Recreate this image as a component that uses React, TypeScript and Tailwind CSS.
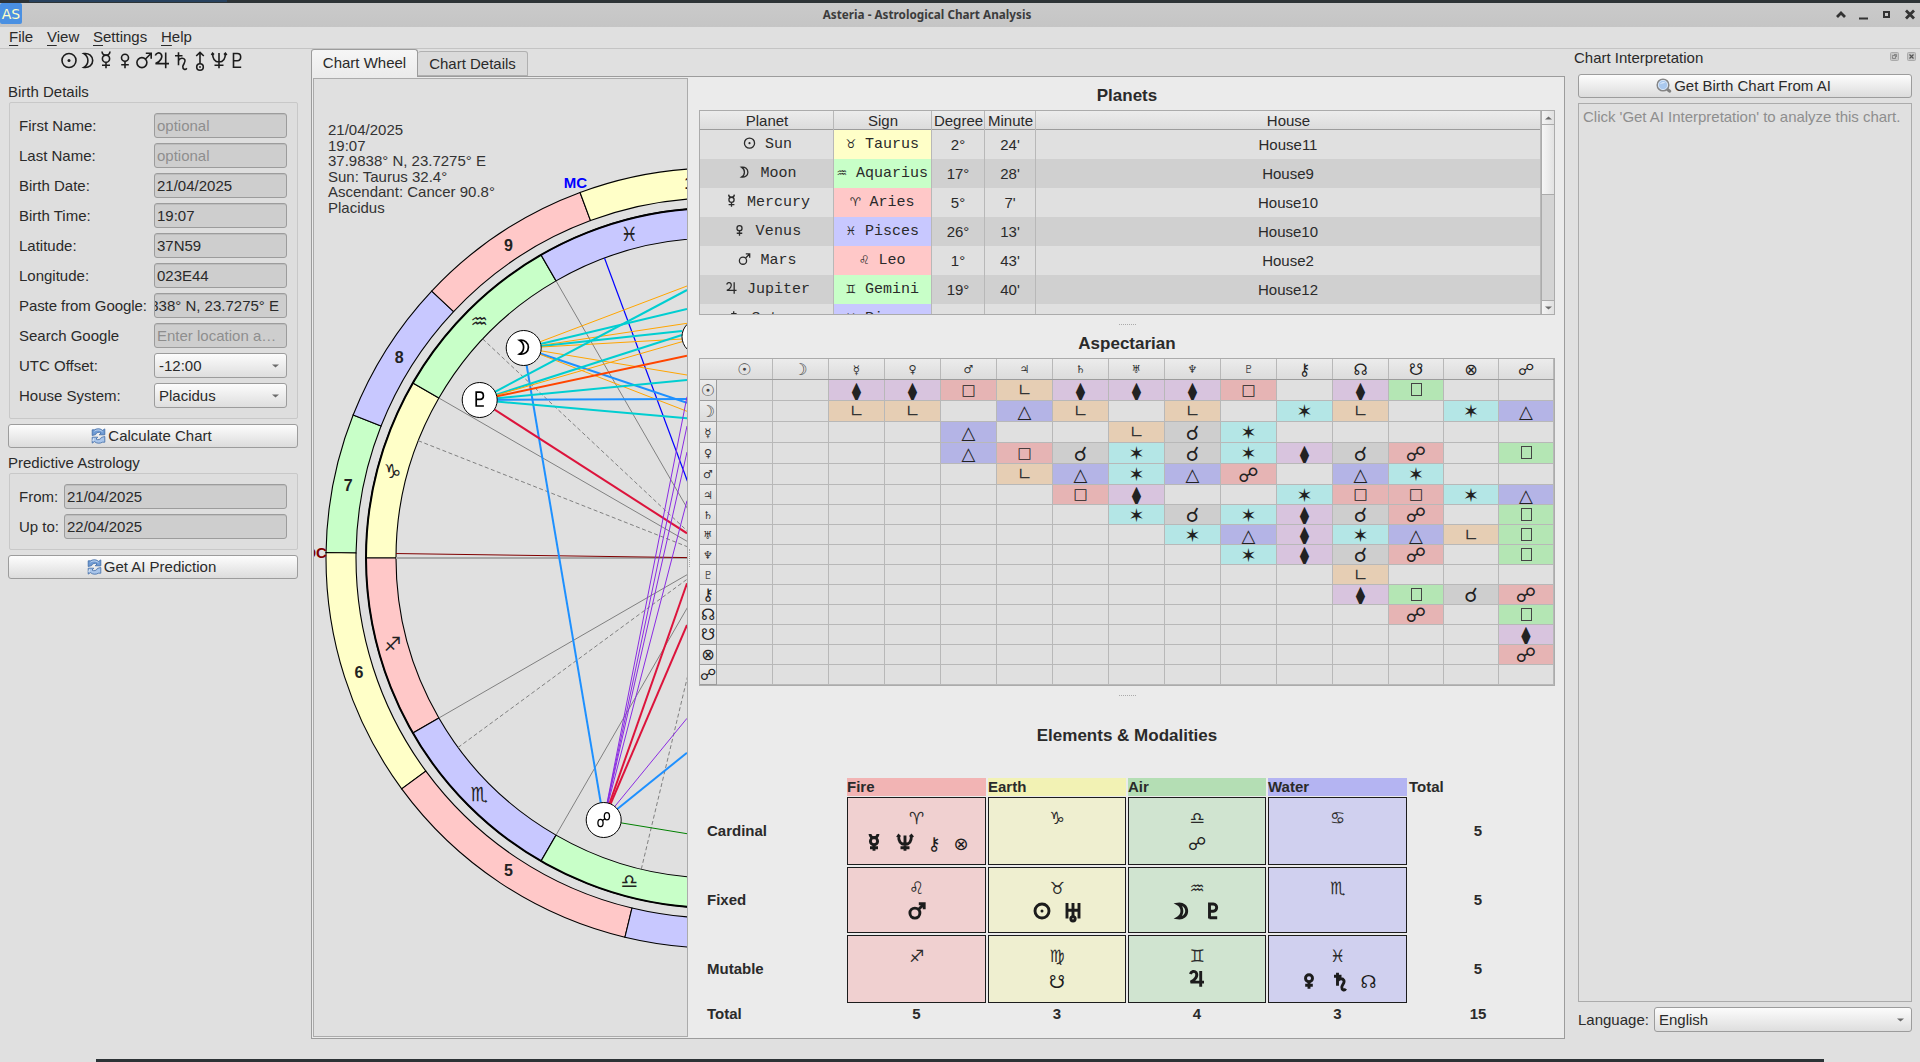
import React from "react";

const SYM = "font-['DejaVu_Sans',sans-serif]";

type Tone = "earth" | "air" | "fire" | "water";

const SIGN_BG: Record<Tone, string> = {
  earth: "bg-[#ffffc8]",
  air: "bg-[#c8ffc8]",
  fire: "bg-[#ffc8c8]",
  water: "bg-[#c8c8ff]",
};

function Glyph({ children, className = "" }: { children: React.ReactNode; className?: string }) {
  return <span className={`${SYM} ${className}`}>{children}</span>;
}

/* Line drawings of the planets on an 18x20 box with the base line at y = 17. */
function PlanetShape({ name }: { name: string }) {
  const dot = { fill: "currentColor", stroke: "none" };
  switch (name) {
    case "sun":
      return (
        <>
          <circle cx="9" cy="9.500" r="7" />
          <circle cx="9" cy="9.500" r="1.500" {...dot} />
        </>
      );
    case "moon":
      return <path d="M4.800 2.600C10 1.800 13.700 5.200 13.700 9.600S10 17.200 4.800 16.400C8 14.500 8.900 12 8.900 9.500S8 4.500 4.800 2.600Z" />;
    case "mercury":
      return (
        <>
          <path d="M5 .5q.3 3.700 4 3.700t4-3.700M9 11.400V17.200M5 14.300h8" />
          <circle cx="9" cy="7.700" r="3.600" />
        </>
      );
    case "venus":
      return (
        <>
          <circle cx="9" cy="6.800" r="3.500" />
          <path d="M9 10.300V17.200M5.200 13.800h7.600" />
        </>
      );
    case "mars":
      return (
        <>
          <circle cx="6.900" cy="11.600" r="5" />
          <path d="M10.500 8l5.200-5.200M10.800 2.300h5.400v5.400" />
        </>
      );
    case "jupiter":
      return <path d="M2.300 4.500C3.300 1.700 6.500 1 8.200 3.200C10 6 7.500 10.800 2.500 12.600H16M12.700 1.500V17.200" />;
    case "saturn":
      return <path d="M3 4.800h7.500M6.500 1.200V14.200M6.500 9.500C8.200 6.800 11.500 6.500 12.800 8.700C14.200 11.200 11 13 10.800 15.500C10.700 18.500 13.300 19.500 14.800 17.300" />;
    case "uranus-arrow":
      return (
        <>
          <path d="M9 1.500V12.700M5.200 5L9 1.400L12.800 5" />
          <circle cx="9" cy="16" r="3.300" />
          <circle cx="9" cy="16" r=".9" {...dot} />
        </>
      );
    case "uranus":
      return (
        <>
          <path d="M3 1.500v15.500M15 1.500v15.500M3 8.800h12M9 1.500v13.500" />
          <circle cx="9" cy="17.300" r="2.200" />
        </>
      );
    case "neptune":
      return <path d="M2.600 2.200C2.600 8.500 4.500 11 9 11S15.400 8.500 15.400 2.200M9 2V17.200M4.500 14.200h9M1.400 4L2.600 2.200L4 3.600M14 3.600l1.400-1.400l1.400 1.800" />;
    case "pluto":
      return <path d="M5.500 17V2.500H9.300C13.800 2.500 13.800 9.700 9.300 9.700H5.500M5.500 16.300h7.700" />;
  }
  return null;
}

function Planet({ name, className, weight = 1.6 }: { name: string; className: string; weight?: number }) {
  return (
    <svg className={`shrink-0 overflow-visible ${className}`} viewBox="0 0 18 20" fill="none" stroke="currentColor" strokeWidth={weight}>
      <PlanetShape name={name} />
    </svg>
  );
}

function Field({ value, placeholder, right }: { value?: string; placeholder?: string; right?: boolean }) {
  return (
    <div
      className={`flex h-[25px] min-w-0 flex-1 items-center overflow-hidden rounded-[3px] border border-[#9c9c9c] bg-[#cecece] shadow-[inset_0_1px_0_#bdbdbd] ${right ? "justify-end pr-[7px]" : "pl-[2px]"}`}
    >
      <span className={`whitespace-nowrap ${placeholder ? "text-[#8e8e8e]" : ""}`}>{value ?? placeholder}</span>
    </div>
  );
}

function Combo({ value }: { value: string }) {
  return (
    <div className="flex h-[25px] min-w-0 flex-1 items-center justify-between rounded-[3px] border border-[#9c9c9c] bg-linear-to-b from-[#fcfcfc] to-[#dedede] pr-[7px] pl-1">
      <span>{value}</span>
      <svg width="7" height="4" viewBox="0 0 7 4">
        <path d="M0 .5h7L3.5 3.5z" fill="#6a6a6a" />
      </svg>
    </div>
  );
}

function RefreshIcon() {
  return (
    <svg width="15" height="16" viewBox="0 0 15 16" fill="none">
      <path d="M1.200 7.500V1.800h2.300C6 .3 9.500.4 11.500 2.400L13.800.9V6.800H8.200L10 5C8.300 3.700 5.400 4.200 4.600 6.600z" fill="#6f9bd4" stroke="#3d69a6" strokeWidth=".8" />
      <path d="M3.500 3.200C6 1.300 9.500 1.700 11.500 3.800" stroke="#d5e3f5" strokeWidth=".9" />
      <path d="M13.800 8.500v5.700h-2.300C9 15.700 5.500 15.600 3.500 13.600L1.200 15.100V9.200h5.600L5 11c1.700 1.300 4.600.8 5.400-1.600z" fill="#a9c5ea" stroke="#3d69a6" strokeWidth=".8" />
      <path d="M2.500 10.500L1.800 13" stroke="#eef4fc" strokeWidth=".9" />
    </svg>
  );
}

function SearchIcon() {
  return (
    <svg width="16" height="16" viewBox="0 0 16 16" fill="none">
      <path d="M11.500 11.500l2.300 1.700" stroke="#808080" strokeWidth="3" strokeLinecap="round" />
      <circle cx="7" cy="7" r="5.800" fill="#a9c8ee" stroke="#858585" strokeWidth="1.500" />
      <circle cx="7" cy="7" r="4.600" stroke="#dce8f6" strokeWidth=".9" />
      <path d="M3.800 6.500C4.500 4 8 3 9.500 5 8 5 5 5.500 3.800 6.500z" fill="#dbe9fa" />
    </svg>
  );
}

function PushButton({ icon, label }: { icon: React.ReactNode; label: string }) {
  return (
    <div className="flex h-6 shrink-0 items-center justify-center gap-[2px] rounded-[3px] border border-[#9c9c9c] bg-linear-to-b from-[#fdfdfd] to-[#dcdcdc] pr-[3px] pb-px">
      {icon}
      <span>{label}</span>
    </div>
  );
}

function TitleBar() {
  return (
    <div className="flex h-6 shrink-0 items-center bg-linear-to-b from-[#cacaca] to-[#c5c5c5]">
      <div className="mb-[3px] flex h-[21px] w-[22px] items-center justify-center rounded-[2px] bg-[#4a90e2] pt-px font-['DejaVu_Sans'] text-[14px] text-[#ffffc8]">AS</div>
      <div className="flex-1 pr-[3px] pb-[4px] text-center leading-none font-bold text-[#3c3c3c]">
        <span className="font-['Noto_Sans'] text-[11.750px]">Asteria - Astrological Chart Analysis</span>
      </div>
      <svg className="mr-[3px] mb-[2px]" width="82" height="14" viewBox="0 0 82 14" fill="none" stroke="#333" strokeWidth="2.800">
        <path d="M2 10l4-4 4 4" />
        <path d="M24 11.500h9" strokeWidth="2" />
        <rect x="49" y="5" width="5" height="5" strokeWidth="2" />
        <path d="M71 3.500l8 8M79 3.500l-8 8" />
      </svg>
    </div>
  );
}

function MenuBar() {
  const items: [string, string, string][] = [
    ["F", "ile", "w-[38px]"],
    ["V", "iew", "w-[46px]"],
    ["S", "ettings", "w-[68px]"],
    ["H", "elp", "w-[50px]"],
  ];
  return (
    <div className="flex h-[22px] shrink-0 items-center border-b border-[#c4c4c4] pb-[2px] pl-[9px]">
      {items.map(([a, b, w]) => (
        <span key={a} className={`${w} leading-[19px]`}>
          <span className="underline underline-offset-[3px]">{a}</span>
          {b}
        </span>
      ))}
    </div>
  );
}

function FormRow({ label, w, children }: { label: string; w: string; children: React.ReactNode }) {
  return (
    <div className="flex items-center">
      <span className={`${w} shrink-0 whitespace-nowrap ${label.length > 16 ? "tracking-[-0.080px]" : ""}`}>{label}</span>
      {children}
    </div>
  );
}

const BANNER = ["sun", "moon", "mercury", "venus", "mars", "jupiter", "saturn", "uranus-arrow", "neptune", "pluto"];

function LeftDock() {
  return (
    <div className="flex w-[311px] shrink-0 flex-col pr-[13px] pl-2">
      <div className="ml-[52px] flex h-6 gap-[0.700px] pt-[2px] text-[#1c1c1c]">
        {BANNER.map((n) => (
          <Planet key={n} name={n} className="h-5 w-[18px]" />
        ))}
      </div>
      <div className="mt-[9px] h-5 leading-5">Birth Details</div>
      <div className="ml-px flex h-[317px] flex-col gap-[5px] rounded-[2px] border border-[#c8c8c8] bg-[#dedede] py-[10px] pr-[10px] pl-[9px]">
        <FormRow w="w-[135px]" label="First Name:"><Field placeholder="optional" /></FormRow>
        <FormRow w="w-[135px]" label="Last Name:"><Field placeholder="optional" /></FormRow>
        <FormRow w="w-[135px]" label="Birth Date:"><Field value="21/04/2025" /></FormRow>
        <FormRow w="w-[135px]" label="Birth Time:"><Field value="19:07" /></FormRow>
        <FormRow w="w-[135px]" label="Latitude:"><Field value="37N59" /></FormRow>
        <FormRow w="w-[135px]" label="Longitude:"><Field value="023E44" /></FormRow>
        <FormRow w="w-[135px]" label="Paste from Google:"><Field value="37.9838° N, 23.7275° E" right /></FormRow>
        <FormRow w="w-[135px]" label="Search Google"><Field placeholder="Enter location a…" /></FormRow>
        <FormRow w="w-[135px]" label="UTC Offset:"><Combo value="-12:00" /></FormRow>
        <FormRow w="w-[135px]" label="House System:"><Combo value="Placidus" /></FormRow>
      </div>
      <div className="mt-[5px]" />
      <PushButton icon={<RefreshIcon />} label="Calculate Chart" />
      <div className="mt-[5px] h-5 leading-5">Predictive Astrology</div>
      <div className="ml-px flex h-[77px] flex-col gap-[5px] rounded-[2px] border border-[#c8c8c8] bg-[#dedede] py-[10px] pr-[10px] pl-[9px]">
        <FormRow w="w-[45px]" label="From:"><Field value="21/04/2025" /></FormRow>
        <FormRow w="w-[45px]" label="Up to:"><Field value="22/04/2025" /></FormRow>
      </div>
      <div className="mt-[5px]" />
      <PushButton icon={<RefreshIcon />} label="Get AI Prediction" />
    </div>
  );
}

/* Natal wheel: angles are degrees clockwise from the left horizon. */
const CX = 716;
const CY = 558;
const pt = (r: number, deg: number): [number, number] => {
  const a = (deg * Math.PI) / 180;
  return [CX - r * Math.cos(a), CY - r * Math.sin(a)];
};
const band = (r1: number, r2: number, a: number, b: number) => {
  const p = [pt(r1, a), pt(r1, b), pt(r2, b), pt(r2, a)].map((q) => q.join(" "));
  return `M${p[0]}A${r1} ${r1} 0 0 1 ${p[1]}L${p[2]}A${r2} ${r2} 0 0 0 ${p[3]}Z`;
};

const HOUSES: [number, number, string, string][] = [
  [0.8, 21.5, "#c8ffc8", "7"],
  [21.5, 43.2, "#c8c8ff", "8"],
  [43.2, 69.6, "#ffc8c8", "9"],
  [69.6, 103.5, "#ffffc8", "10"],
  [-36.3, 0.8, "#ffffc8", "6"],
  [-76.5, -36.3, "#ffc8c8", "5"],
  [-110.4, -76.5, "#c8c8ff", ""],
];
const SIGNS: [number, string, string][] = [
  [0, "#ffffc8", "♑"],
  [30, "#c8ffc8", "♒"],
  [60, "#c8c8ff", "♓"],
  [-30, "#ffc8c8", "♐"],
  [-60, "#c8c8ff", "♏"],
  [-90, "#c8ffc8", "♎"],
];
const MOON: [number, number] = [523.7, 348];
const PLUTO: [number, number] = [479.7, 400];
const OPP: [number, number] = [603.7, 820];
const ORANGE = "#ffa500", CYAN = "#00ced1", BLUE = "#1e90ff", PURPLE = "#8a2be2", CRIMSON = "#dc143c", RED = "#ff4500";
const ASPECTS: [[number, number], number, number, string, number][] = [
  [MOON, 687, 286, ORANGE, 1],
  [MOON, 687, 309, CYAN, 2],
  [MOON, 687, 323.3, ORANGE, 1],
  [MOON, 682, 331, CYAN, 2],
  [MOON, 682, 339, ORANGE, 1],
  [MOON, 687, 375, ORANGE, 1],
  [MOON, 687, 402.7, BLUE, 2],
  [MOON, 687, 411.3, ORANGE, 1],
  [MOON, 603.7, 820, BLUE, 2],
  [PLUTO, 687, 290, CYAN, 2],
  [PLUTO, 682, 335, CYAN, 2],
  [PLUTO, 682, 341.7, ORANGE, 1],
  [PLUTO, 687, 355.7, RED, 2],
  [PLUTO, 687, 380, CYAN, 2],
  [PLUTO, 687, 399, BLUE, 2],
  [PLUTO, 687, 418.3, CYAN, 2],
  [PLUTO, 687, 533.3, CRIMSON, 2],
  [OPP, 687, 396.7, PURPLE, 1],
  [OPP, 687, 426, PURPLE, 1],
  [OPP, 687, 452, PURPLE, 1],
  [OPP, 687, 500.7, PURPLE, 1],
  [OPP, 687, 583.3, CRIMSON, 2],
  [OPP, 687, 625, CRIMSON, 2],
  [OPP, 687, 718.3, PURPLE, 1],
  [OPP, 687, 752.7, BLUE, 2],
  [OPP, 687, 833.7, "#008000", 1],
];
const MARKERS: [[number, number], string][] = [
  [MOON, "moon"],
  [PLUTO, "pluto"],
  [OPP, "opposition"],
  [[699.5, 336.7], ""],
];

function Wheel() {
  const info = ["21/04/2025", "19:07", "37.9838° N, 23.7275° E", "Sun: Taurus 32.4°", "Ascendant: Cancer 90.8°", "Placidus"];
  return (
    <svg className="block h-full w-full" viewBox="314 79 373 958" preserveAspectRatio="xMinYMin slice" fill="none">
      <g fill="#333" fontSize="15">
        {info.map((t, i) => (
          <text key={t} x="328" y={135 + i * 15.6}>
            {t}
          </text>
        ))}
      </g>
      {HOUSES.map(([a, b, c]) => (
        <path key={a} d={band(390, 360, a, b)} fill={c} stroke="#000" strokeWidth="1.100" />
      ))}
      {SIGNS.map(([a, c]) => (
        <path key={a} d={band(350, 320, a, a + 30)} fill={c} stroke="#000" strokeWidth="1.100" />
      ))}
      <circle cx={CX} cy={CY} r="350" stroke="#000" strokeWidth="2" />
      {[60, 30, 0, -30, -60].map((a) => {
        const [x, y] = pt(320, a);
        return <path key={a} d={`M${x} ${y}L${CX} ${CY}`} stroke={a === 0 ? "#a8a8a8" : "#808080"} strokeWidth={a === 0 ? 2 : 1} />;
      })}
      {[21.5, 43.2, -36.3, -76.5].map((a) => {
        const [x, y] = pt(320, a);
        return <path key={a} d={`M${x} ${y}L${CX} ${CY}`} stroke="#808080" strokeDasharray="4 2.500" />;
      })}
      <path d={`M${pt(320, 0.8).join(" ")}L${CX} ${CY}`} stroke="#800000" />
      <path d={`M${pt(320, 69.6).join(" ")}L${CX} ${CY}`} stroke="#0000ff" strokeWidth="1.200" />
      {ASPECTS.map(([p, x, y, c, w], i) => (
        <path key={i} d={`M${p[0]} ${p[1]}L${x} ${y}`} stroke={c} strokeWidth={w === 2 ? 2 : 1} />
      ))}
      {HOUSES.map(([a, b, , n]) => {
        const [x, y] = pt(375, (a + b) / 2);
        return (
          <text key={n} x={x} y={y + 5.500} textAnchor="middle" fill="#222" fontSize="16" fontWeight="bold">
            {n}
          </text>
        );
      })}
      {SIGNS.map(([a, , s]) => {
        const [x, y] = pt(335, a + 15);
        return (
          <text key={s} x={x} y={y + 6.500} textAnchor="middle" fill="#222" fontSize="19.500" className={SYM}>
            {s}
          </text>
        );
      })}
      {MARKERS.map(([[x, y], s]) => (
        <g key={x}>
          <circle cx={x} cy={y} r="17.500" fill="#fff" stroke="#000" />
          {s === "opposition" ? (
            <g stroke="#000" strokeWidth="1.300">
              <ellipse cx={x - 3.200} cy={y + 3} rx="2.600" ry="3.600" />
              <ellipse cx={x + 3.200} cy={y - 3.700} rx="2.600" ry="3.600" />
              <path d={`M${x - 1.500} ${y + 0.8}L${x + 1.500} ${y - 1.500}`} />
            </g>
          ) : (
            <g transform={`translate(${x - 9} ${y - 10.3})`} stroke="#000" strokeWidth="1.700">
              <PlanetShape name={s} />
            </g>
          )}
        </g>
      ))}
      <text x="575.500" y="188" textAnchor="middle" fill="#0000ff" fontSize="15" fontWeight="bold">
        MC
      </text>
      <text x="316" y="558" textAnchor="middle" fill="#800000" fontSize="15" fontWeight="bold">
        DC
      </text>
    </svg>
  );
}

const PLANETS: [string, string, string, string, Tone, string, string, string][] = [
  ["sun", "Sun", "♉", "Taurus", "earth", "2°", "24'", "House11"],
  ["moon", "Moon", "♒", "Aquarius", "air", "17°", "28'", "House9"],
  ["mercury", "Mercury", "♈", "Aries", "fire", "5°", "7'", "House10"],
  ["venus", "Venus", "♓", "Pisces", "water", "26°", "13'", "House10"],
  ["mars", "Mars", "♌", "Leo", "fire", "1°", "43'", "House2"],
  ["jupiter", "Jupiter", "♊", "Gemini", "air", "19°", "40'", "House12"],
  ["saturn", "Saturn", "♓", "Pisces", "water", "", "", ""],
];
const PCOLS = "grid grid-cols-[134px_98px_53px_51px_1fr]";

function Arrow({ down }: { down?: boolean }) {
  return (
    <div className="flex h-[13px] items-center justify-center bg-linear-to-r from-[#f4f4f4] to-[#e0e0e0]">
      <svg width="7" height="4" viewBox="0 0 7 4" className={down ? "" : "rotate-180"}>
        <path d="M0 .5h7L3.500 3.500z" fill="#6a6a6a" />
      </svg>
    </div>
  );
}

function PlanetTable() {
  return (
    <div className="flex h-[205px] border border-[#ababab]">
      <div className="flex min-w-0 flex-1 flex-col overflow-hidden">
        <div className={`${PCOLS} h-[19px] shrink-0 border-b border-[#9c9c9c] bg-linear-to-b from-[#ececec] to-[#dcdcdc] text-center leading-[19px]`}>
          {["Planet", "Sign", "Degree", "Minute", "House"].map((h) => (
            <div key={h} className="border-r border-[#b8b8b8] pl-px">
              {h}
            </div>
          ))}
        </div>
        {PLANETS.map(([g, n, sg, sn, tone, d, m, h], i) => (
          <div key={n} className={`${PCOLS} h-[29px] shrink-0 text-center ${i % 2 ? "bg-[#d0d0d0]" : "bg-[#e0e0e0]"} *:border-r *:border-b *:border-[#b8b8b8]`}>
            <div className="flex items-start justify-center gap-[9px] pl-[2px] font-['Liberation_Mono',monospace] leading-[29px]">
              <Planet name={g} className="h-[27px] w-[13px]" weight={1.8} />
              <span className={n === "Venus" ? "tracking-[0.200px]" : ""}>{n}</span>
            </div>
            <div className={`${SIGN_BG[tone]} flex justify-center gap-[9px] font-['Liberation_Mono',monospace] leading-[29px]`}>
              <Glyph className="flex w-[10px] justify-center text-[12px]">{sg}</Glyph>
              <span>{sn}</span>
            </div>
            <div className="leading-[30px]">{d}</div>
            <div className="leading-[30px]">{m}</div>
            <div className="leading-[30px]">{h}</div>
          </div>
        ))}
      </div>
      <div className="flex w-[13px] flex-col border-l border-[#ababab] bg-[#d4d4d4]">
        <Arrow />
        <div className="h-[71px] border-y border-[#ababab] bg-linear-to-r from-[#f6f6f6] to-[#e2e2e2]" />
        <div className="flex-1 border-b border-[#ababab]" />
        <Arrow down />
      </div>
    </div>
  );
}

const BODIES: [string, string][] = [
  ["☉", "text-[16px] text-[#444]"],
  ["☽", "text-[16px] text-[#444]"],
  ["☿", "text-[12px] text-[#333]"],
  ["♀", "text-[11px] text-[#333]"],
  ["♂", "text-[11px] text-[#333]"],
  ["♃", "text-[11px] text-[#333]"],
  ["♄", "text-[11px] text-[#333]"],
  ["♅", "text-[11px] text-[#333]"],
  ["♆", "text-[11px] text-[#333]"],
  ["♇", "text-[11px] text-[#444]"],
  ["⚷", "text-[16px]"],
  ["☊", "text-[16px]"],
  ["☋", "text-[16px]"],
  ["⊗", "text-[16px]"],
  ["☍", "text-[16px]"],
];
/* d parallel, s square, l semi-square, t trine, x sextile, c conjunction, o opposition, q quincunx */
const GRID = [
  "..ddslddds.dq..",
  "..ll.tl.l.xl.xt",
  "....t..lcx.....",
  "....tscxcxdco.q",
  ".....ltxto.tx..",
  "......sd..xssxt",
  ".......xcxdco.q",
  "........xtdxtlq",
  ".........xdco.q",
  "...........l...",
  "...........dqco",
  "............o.q",
  "..............d",
  "..............o",
  "...............",
];
const ASPECT_STYLE: Record<string, [string, string, string]> = {
  d: ["bg-[#d8c4de]", "⧫", "mt-[2px] text-[19px]"],
  s: ["bg-[#e6b4b4]", "□", "text-[15px]"],
  l: ["bg-[#e6ceb4]", "∟", "mt-px text-[17px] text-[#333]"],
  t: ["bg-[#b4b4e6]", "△", "mt-[2px] text-[18px]"],
  x: ["bg-[#b4e6e6]", "✶", "mt-px text-[19px]"],
  c: ["bg-[#cecece]", "☌", "mt-px text-[20px]"],
  o: ["bg-[#e6b4b4]", "☍", "mt-px text-[20px]"],
  q: ["bg-[#b4e6b4]", "", ""],
  ".": ["bg-[#e0e0e0]", "", ""],
};
const ACOLS = "grid grid-cols-[17px_repeat(12,56px)_55px_55px_55px]";

function AspectGrid() {
  return (
    <div className="h-[328px] border border-[#ababab] text-[#222]">
      <div className={`${ACOLS} h-[21px] border-b border-[#9c9c9c] bg-linear-to-b from-[#ececec] to-[#dcdcdc]`}>
        <div />
        {BODIES.map(([b, size]) => (
          <div key={b} className="flex items-center justify-center border-r border-[#b8b8b8] pt-px">
            <Glyph className={`${size} leading-none`}>{b}</Glyph>
          </div>
        ))}
      </div>
      {GRID.map((row, r) => (
        <div key={r} className={`${ACOLS} ${r < 5 ? "h-[21px]" : "h-5"} overflow-hidden`}>
          <div className="flex items-center justify-center border-r border-b border-[#9c9c9c] bg-linear-to-b from-[#ececec] to-[#dcdcdc] pt-px">
            <Glyph className={`${BODIES[r][1]} leading-none`}>{BODIES[r][0]}</Glyph>
          </div>
          {row.split("").map((k, c) => {
            const [bg, g, size] = ASPECT_STYLE[k];
            return (
              <div key={c} className={`flex min-h-0 items-center justify-center overflow-hidden border-r border-b border-[#b8b8b8] ${bg}`}>
                {k === "q" && <span className="mb-px h-[13px] w-[11px] border border-[#444]" />}
                {g && <Glyph className={`${size} leading-none`}>{g}</Glyph>}
              </div>
            );
          })}
        </div>
      ))}
    </div>
  );
}

const ELEMENTS: [string, string, string][] = [
  ["Fire", "bg-[#f2b4b4]", "bg-[#f0d0d0]"],
  ["Earth", "bg-[#f2f2b4]", "bg-[#efefd0]"],
  ["Air", "bg-[#b4deb4]", "bg-[#d0e4d0]"],
  ["Water", "bg-[#b4b4f2]", "bg-[#d0d0ef]"],
];
const LIGHT = ["⚷", "⊗", "☍", "☋", "☊"];
const MODES: [string, string, [string, string[]][]][] = [
  ["Cardinal", "h-[68px]", [["♈", ["mercury", "neptune", "⚷", "⊗"]], ["♑", []], ["♎", ["☍"]], ["♋", []]]],
  ["Fixed", "h-[66px]", [["♌", ["mars"]], ["♉", ["sun", "uranus"]], ["♒", ["moon", "pluto"]], ["♏", []]]],
  ["Mutable", "h-[68px]", [["♐", []], ["♍", ["☋"]], ["♊", ["jupiter"]], ["♓", ["venus", "saturn", "☊"]]]],
];
const ECOLS = "grid grid-cols-[138px_139px_138px_138px_139px_138px] gap-x-[2px]";

function ElementsTable() {
  return (
    <div className="flex flex-col gap-[2px] pl-2">
      <div className={`${ECOLS} h-[17px] font-bold`}>
        <div />
        {ELEMENTS.map(([n, bg]) => (
          <div key={n} className={`${bg} leading-[18px]`}>
            {n}
          </div>
        ))}
        <div className="leading-[18px]">Total</div>
      </div>
      {MODES.map(([name, h, cells]) => (
        <div key={name} className={`${ECOLS} ${h}`}>
          <div className="flex items-center pb-[2px] font-bold">{name}</div>
          {cells.map(([sign, bodies], i) => (
            <div key={sign} className={`flex flex-col items-center border border-[#1c1c1c] pt-[10px] ${ELEMENTS[i][2]}`}>
              <Glyph className="h-[23px] text-[17px] leading-[20px]">{sign}</Glyph>
              <div className={`flex h-5 items-center gap-[13px] text-[#1c1c1c] ${bodies.some((b) => LIGHT.includes(b)) ? "mt-[2px]" : ""}`}>
                {bodies.map((b) =>
                  LIGHT.includes(b) ? (
                    <Glyph key={b} className="mt-[2px] flex w-[14px] justify-center text-[18px] leading-none">{b}</Glyph>
                  ) : (
                    <Planet key={b} name={b} className="h-[21px] w-[18px]" weight={2.9} />
                  ),
                )}
              </div>
            </div>
          ))}
          <div className="flex items-center justify-center pb-[2px] font-bold">5</div>
        </div>
      ))}
      <div className={`${ECOLS} text-center leading-[18px] font-bold`}>
        <div className="text-left">Total</div>
        <div>5</div>
        <div>3</div>
        <div>4</div>
        <div>3</div>
        <div>15</div>
      </div>
    </div>
  );
}

function Grip({ vertical }: { vertical?: boolean }) {
  return <div className={vertical ? "h-[18px] w-px border-l border-dotted border-[#aaa]" : "mx-auto h-px w-[17px] border-t border-dotted border-[#aaa]"} />;
}

function Center() {
  return (
    <div className="flex w-[1254px] shrink-0 flex-col">
      <div className="flex h-[27px] items-end">
        <div className="z-10 -mb-px flex h-[28px] w-[107px] items-center justify-center rounded-t-[3px] border border-b-0 border-[#9c9c9c] bg-linear-to-b from-[#f6f6f6] to-[#ebebeb] pb-[3px]">Chart Wheel</div>
        <div className="flex h-[25px] w-[110px] items-center justify-center rounded-t-[3px] border border-l-0 border-[#b0b0b0] bg-[#dadada]">Chart Details</div>
      </div>
      <div className="flex h-[963px] border border-[#9c9c9c] bg-[#ebebeb]">
        <div className="my-px ml-px w-[375px] shrink-0 overflow-hidden border border-[#ababab] bg-[#e0e0e0]">
          <Wheel />
        </div>
        <div className="flex w-[11px] items-center pl-px"><Grip vertical /></div>
        <div className="flex w-[856px] flex-col">
          <div className="h-[33px] pt-[9px] text-center text-[17px] leading-5 font-bold">Planets</div>
          <PlanetTable />
          <div className="pt-[9px]"><Grip /></div>
          <div className="h-[33px] pt-[9px] text-center text-[17px] leading-5 font-bold">Aspectarian</div>
          <AspectGrid />
          <div className="pt-[9px]"><Grip /></div>
          <div className="h-[82px] pt-[30px] text-center text-[17px] leading-5 font-bold">Elements &amp; Modalities</div>
          <ElementsTable />
        </div>
      </div>
    </div>
  );
}

function RightDock() {
  return (
    <div className="flex min-w-0 flex-1 flex-col pr-2 pl-[13px]">
      <div className="-ml-1 flex h-[25px] items-start justify-between">
        <span className="leading-[17px]">Chart Interpretation</span>
        <svg className="mt-[3px] -mr-[4px]" width="26" height="9" viewBox="0 0 26 9" fill="none">
          <rect x=".5" y=".5" width="8" height="8" rx="1" fill="#c6c6c6" stroke="#aaa" />
          <path d="M2.500 4.500v2h3v-3h-3zM4 2.500h2.500V5" stroke="#777" strokeWidth=".8" />
          <rect x="17.500" y=".5" width="8" height="8" rx="1" fill="#c6c6c6" stroke="#aaa" />
          <path d="M19.500 2.500l4 4M23.500 2.500l-4 4" stroke="#555" strokeWidth="1.200" />
        </svg>
      </div>
      <PushButton icon={<SearchIcon />} label="Get Birth Chart From AI" />
      <div className="mt-[5px] h-[899px] border border-[#ababab] pt-1 pl-1 leading-[18px] tracking-[-0.020px] text-[#8e8e8e]">Click 'Get AI Interpretation' to analyze this chart.</div>
      <div className="mt-[5px] flex items-center">
        <span className="w-[76px] shrink-0">Language:</span>
        <Combo value="English" />
      </div>
    </div>
  );
}

export default function App() {
  return (
    <div className="flex h-[1062px] w-[1920px] flex-col overflow-hidden bg-[#e0e0e0] font-['Liberation_Sans',Arial,sans-serif] text-[15px] leading-none text-[#2a2a2a]">
      <div className="h-[3px] shrink-0 bg-[#2d3336] pl-[29px]">
        <div className="h-[2px] w-[198px] bg-[#27415e]" />
      </div>
      <TitleBar />
      <MenuBar />
      <div className="flex min-h-0 flex-1">
        <LeftDock />
        <Center />
        <RightDock />
      </div>
      <div className="mx-24 h-[3px] shrink-0 bg-[#2d3336]" />
    </div>
  );
}
